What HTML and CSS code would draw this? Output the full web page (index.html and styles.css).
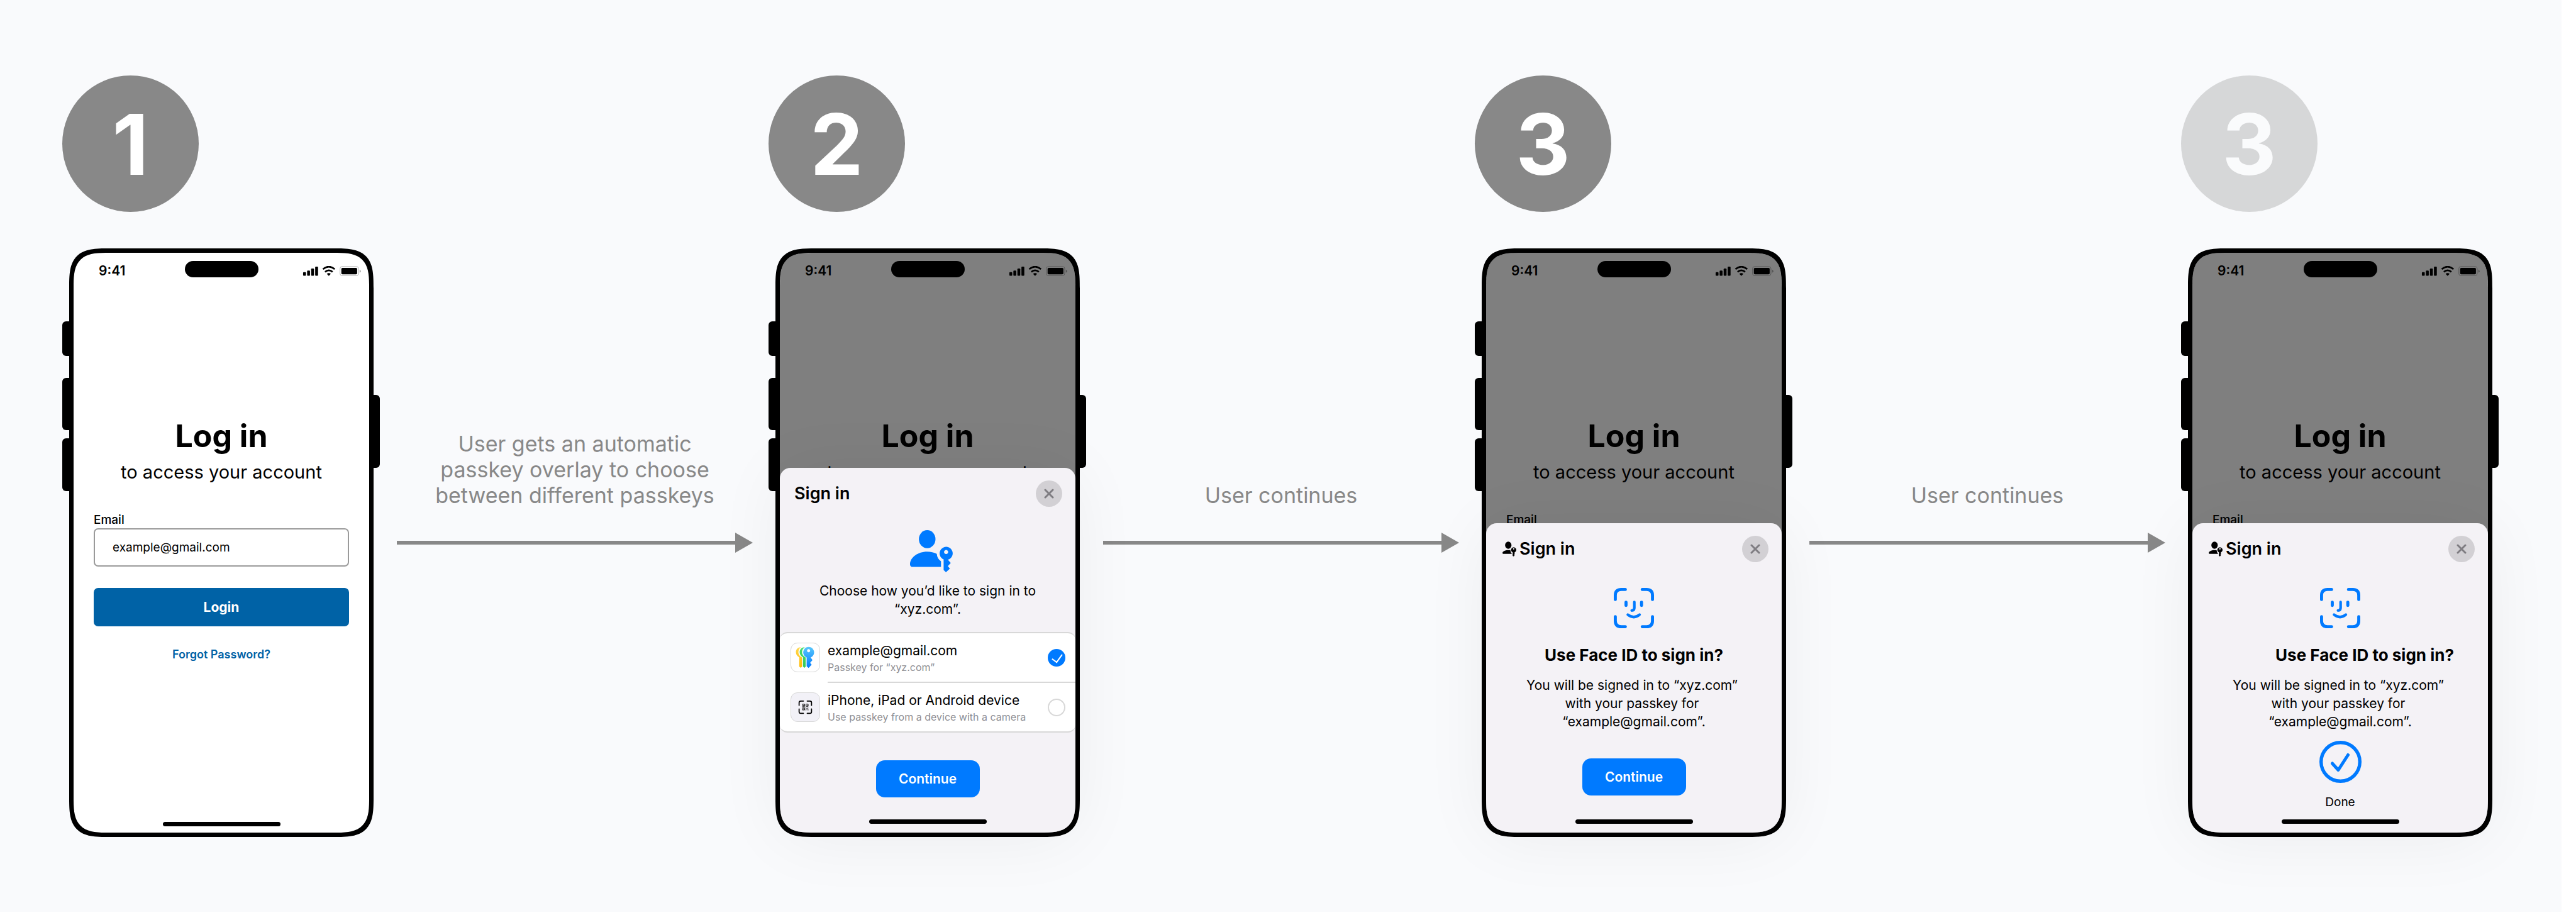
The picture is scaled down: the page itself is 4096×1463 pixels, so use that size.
FILE: index.html
```html
<!DOCTYPE html>
<html lang="en">
<head>
<meta charset="utf-8">
<meta name="viewport" content="width=device-width, initial-scale=1">
<title>Passkey sign-in flow</title>
<link rel="stylesheet" href="styles.css">
</head>
<body>
<svg class="sprite" aria-hidden="true">
  <defs>
    <linearGradient id="key-blue" x1="0" y1="0" x2="0" y2="1"><stop offset="0" stop-color="#5ac8fa"/><stop offset="1" stop-color="#007aff"/></linearGradient>
    <linearGradient id="key-green" x1="0" y1="0" x2="0" y2="1"><stop offset="0" stop-color="#4be070"/><stop offset="1" stop-color="#34c759"/></linearGradient>
    <linearGradient id="key-yellow" x1="0" y1="0" x2="0" y2="1"><stop offset="0" stop-color="#ffd84f"/><stop offset="1" stop-color="#ffb900"/></linearGradient>
  </defs>
  <symbol id="status" viewBox="0 0 403 70">
    <rect x="0" y="43" width="20" height="25" rx="5"/>
    <rect x="28" y="32" width="20" height="36" rx="5"/>
    <rect x="56" y="18" width="20" height="50" rx="5"/>
    <rect x="84" y="4" width="20" height="64" rx="5"/>
    <path d="M138 22Q179-12 220 22M153 41Q179 19 205 41" fill="none" stroke="#000" stroke-width="12"/>
    <path d="M165 55Q179 44 193 55L179 69Z"/>
    <rect x="257" y="4" width="128" height="63" rx="14" fill="none" stroke="#aaa" stroke-width="4"/>
    <rect x="266" y="13" width="110" height="45" rx="8"/>
    <path d="M393 25Q402 28 402 36Q402 44 393 47Z" fill="#aaa"/>
  </symbol>
  <symbol id="passkey" viewBox="105 83 294 289">
    <ellipse cx="223" cy="145" rx="57" ry="62"/>
    <path d="M105 318C105 270 160 231 222 231C248 231 270 237 289 246C290 268 300 285 318 297V336H124C112 336 105 330 105 318Z"/>
    <path fill-rule="evenodd" d="M336 284A45 45 0 1 1 365 286L385 309L365 330L379 347L352 372L336 357ZM353 219a14 14 0 1 0 .1 0Z"/>
  </symbol>
  <symbol id="passkey-small" viewBox="63 102 95 102">
    <ellipse cx="103" cy="127" rx="22" ry="25"/>
    <path d="M63 181C63 170 85 161 103 161C109 161 114 161 118 163C118 172 122 181 128 186H68Q63 186 63 181Z"/>
    <path fill-rule="evenodd" d="M133 176A18 18 0 1 1 147 176L146 184L148 188L143 193L146 199L139 204L133 200ZM140 147a5 5 0 1 0 .1 0Z"/>
  </symbol>
  <symbol id="face-id" viewBox="0 0 92 92">
    <g fill="none" stroke="#007aff" stroke-linecap="round" stroke-width="7">
      <path d="M3.500 26.500V17Q3.500 3.500 17 3.500H26.500M65 3.500H75Q88.500 3.500 88.500 17V26.500M88.500 65.500V75Q88.500 88.500 75 88.500H65M26.500 88.500H17Q3.500 88.500 3.500 75V65.500"/>
      <path d="M28 32.500V40M63.500 32.500V40"/>
      <path stroke-width="6" d="M47 32V45.500Q47 51.500 41 51.500M32 61Q46 72 59 61"/>
    </g>
  </symbol>
  <symbol id="close" viewBox="0 0 16 16">
    <path d="M2 2L14 14M14 2L2 14" fill="none" stroke="#7f7d82" stroke-width="3" stroke-linecap="round"/>
  </symbol>
</svg>

<main class="canvas">
  <section class="step">
    <div class="badge">1</div>
    <div class="phone">
      <span class="key key-mute"></span><span class="key key-up"></span><span class="key key-down"></span><span class="key key-power"></span>
      <div class="screen">
        <div class="status-bar"><span class="time">9:41</span><span class="island"></span><svg class="status-icons"><use href="#status"/></svg></div>
        <h1 class="login-title">Log in</h1>
        <p class="login-sub">to access your account</p>
        <form class="login-form">
          <label class="field-label" for="email">Email</label>
          <input class="field" id="email" type="text" value="example@gmail.com">
          <button class="login-button" type="button">Login</button>
          <a class="forgot" href="#">Forgot Password?</a>
        </form>
        <span class="home-bar"></span>
      </div>
    </div>
  </section>

  <div class="connector">
    <p class="connector-text">User gets an automatic<br>passkey overlay to choose<br>between different passkeys</p>
    <div class="arrow"></div>
  </div>

  <section class="step">
    <div class="badge">2</div>
    <div class="phone">
      <span class="key key-mute"></span><span class="key key-up"></span><span class="key key-down"></span><span class="key key-power"></span>
      <div class="screen">
        <div class="status-bar"><span class="time">9:41</span><span class="island"></span><svg class="status-icons"><use href="#status"/></svg></div>
        <h1 class="login-title">Log in</h1>
        <p class="login-sub">to access your account</p>
        <div class="dim"></div>
      </div>
      <div class="sheet">
        <header class="sheet-header">
          <h2 class="sheet-title">Sign in</h2>
          <button class="close" type="button" aria-label="Close"><svg class="close-icon"><use href="#close"/></svg></button>
        </header>
        <svg class="passkey-icon"><use href="#passkey"/></svg>
        <p class="sheet-text choose">Choose how you’d like to sign in to<br>“xyz.com”.</p>
        <div class="options">
          <label class="option" for="opt-passkey">
            <svg class="option-icon" viewBox="35 69 203 203">
              <path fill="url(#key-yellow)" d="M106 97C83 97 69 112 69 133C69 150 79 162 93 169V236L104 245L113 236V170C98 162 87 150 87 133C87 117 94 104 106 97Z"/>
              <path fill="url(#key-green)" d="M133 97C110 97 96 112 96 133C96 150 106 162 120 169V236L131 245L139 236V170C124 162 113 150 113 133C113 117 121 104 133 97Z"/>
              <path fill="url(#key-blue)" fill-rule="evenodd" d="M146 170A39 39 0 1 1 175 170L188 190L171 209L182 222L160 246L146 234ZM160 111a11 11 0 1 0 .1 0Z"/>
            </svg>
            <span class="option-body"><span class="option-name">example@gmail.com</span><span class="option-note">Passkey for “xyz.com”</span></span>
            <input class="radio" id="opt-passkey" type="radio" name="method" checked>
          </label>
          <label class="option option-last" for="opt-device">
            <svg class="option-icon option-icon-tinted" viewBox="35 411 203 203">
              <path fill="none" stroke="#000" stroke-width="8" stroke-linecap="round" d="M92 500V480Q92 469 103 469H123M150 469H170Q181 469 181 480V500M181 526V546Q181 557 170 557H150M123 557H103Q92 557 92 546V526"/>
              <path fill="none" stroke="#000" stroke-width="4" d="M116 491h16v16h-16zM141 491h16v16h-16zM116 517h16v16h-16z"/>
              <path d="M121 496h6v6h-6zM146 496h6v6h-6zM121 522h6v6h-6zM138 516h6v6h-6zM153 516h5v5h-5zM145 522h7v6h-7zM138 529h6v6h-6zM153 529h6v6h-6z"/>
            </svg>
            <span class="option-body"><span class="option-name">iPhone, iPad or Android device</span><span class="option-note">Use passkey from a device with a camera</span></span>
            <input class="radio" id="opt-device" type="radio" name="method">
          </label>
        </div>
        <button class="continue" type="button">Continue</button>
        <span class="home-bar"></span>
      </div>
    </div>
  </section>

  <div class="connector">
    <p class="connector-text">User continues</p>
    <div class="arrow"></div>
  </div>

  <section class="step">
    <div class="badge">3</div>
    <div class="phone">
      <span class="key key-mute"></span><span class="key key-up"></span><span class="key key-down"></span><span class="key key-power"></span>
      <div class="screen">
        <div class="status-bar"><span class="time">9:41</span><span class="island"></span><svg class="status-icons"><use href="#status"/></svg></div>
        <h1 class="login-title">Log in</h1>
        <p class="login-sub">to access your account</p>
        <p class="login-form field-label">Email</p>
        <div class="dim"></div>
      </div>
      <div class="sheet">
        <header class="sheet-header">
          <svg class="title-icon"><use href="#passkey-small"/></svg>
          <h2 class="sheet-title">Sign in</h2>
          <button class="close" type="button" aria-label="Close"><svg class="close-icon"><use href="#close"/></svg></button>
        </header>
        <svg class="face-icon"><use href="#face-id"/></svg>
        <h3 class="face-title">Use Face ID to sign in?</h3>
        <p class="sheet-text">You will be signed in to “xyz.com”&nbsp;<br>with your passkey for&nbsp;<br>“example@gmail.com”.</p>
        <button class="continue" type="button">Continue</button>
        <span class="home-bar home-bar-low"></span>
      </div>
    </div>
  </section>

  <div class="connector">
    <p class="connector-text">User continues</p>
    <div class="arrow"></div>
  </div>

  <section class="step">
    <div class="badge badge-faded">3</div>
    <div class="phone">
      <span class="key key-mute"></span><span class="key key-up"></span><span class="key key-down"></span><span class="key key-power"></span>
      <div class="screen">
        <div class="status-bar"><span class="time">9:41</span><span class="island"></span><svg class="status-icons"><use href="#status"/></svg></div>
        <h1 class="login-title">Log in</h1>
        <p class="login-sub">to access your account</p>
        <p class="login-form field-label">Email</p>
        <div class="dim"></div>
      </div>
      <div class="sheet">
        <header class="sheet-header">
          <svg class="title-icon"><use href="#passkey-small"/></svg>
          <h2 class="sheet-title">Sign in</h2>
          <button class="close" type="button" aria-label="Close"><svg class="close-icon"><use href="#close"/></svg></button>
        </header>
        <svg class="face-icon"><use href="#face-id"/></svg>
        <h3 class="face-title face-title-indented">Use Face ID to sign in?</h3>
        <p class="sheet-text">You will be signed in to “xyz.com”&nbsp;<br>with your passkey for&nbsp;<br>“example@gmail.com”.</p>
        <svg class="done-icon" viewBox="0 0 67 67"><g fill="none" stroke="#007aff"><circle cx="33.500" cy="33.500" r="30.800" stroke-width="5.400"/><path d="M20.500 36L30 46.500L45.500 22.500" stroke-width="5" stroke-linecap="round" stroke-linejoin="round"/></g></svg>
        <p class="done-text">Done</p>
        <span class="home-bar home-bar-done"></span>
      </div>
    </div>
  </section>
</main>
</body>
</html>
```
FILE: styles.css
```css
* { box-sizing: border-box; }

body {
  margin: 0;
  background: #fff;
  color: #000;
  font-family: Inter, "Liberation Sans", sans-serif;
}

h1, h2, h3, p { margin: 0; }

button, input { font-family: inherit; }

.sprite {
  position: absolute;
  width: 0;
  height: 0;
}

/* Canvas: four steps with stretching connectors between them */
.canvas {
  display: grid;
  grid-template-columns: 505px 1fr 505px 1fr 505px 1fr 505px;
  margin: 0 23px 13px 0;
  padding: 120px 100px 119px 99px;
  background: #f9fafc;
}

.badge {
  display: flex;
  align-items: center;
  justify-content: center;
  width: 217px;
  height: 217px;
  border-radius: 50%;
  background: #888;
  color: #fff;
  font-size: 134px;
  font-weight: 700;
  line-height: 162px;
}

.badge-faded { opacity: 0.3; }

.connector {
  align-self: end;
  padding: 0 25px 0 27px;
  margin-bottom: 452px;
}

.connector-text {
  margin-bottom: 39px;
  color: #888;
  font-size: 34px;
  line-height: 41px;
  text-align: center;
  white-space: nowrap;
}

.arrow {
  display: flex;
  align-items: center;
}

.arrow::before {
  content: "";
  flex: 1;
  height: 6px;
  background: #888;
}

.arrow::after {
  content: "";
  width: 28px;
  height: 32px;
  background: #888;
  clip-path: polygon(0 0, 100% 50%, 0 100%);
}

/* Phone */
.phone {
  position: relative;
  aspect-ratio: 484 / 936;
  margin: 58px 10px 0 11px;
  border: 7px solid #000;
  border-radius: 44px;
  background: #fff;
}

.key {
  position: absolute;
  left: -18px;
  width: 14px;
  border-radius: 6px 0 0 6px;
  background: #000;
}

.key-mute { top: 109px; height: 55px; }
.key-up { top: 199px; height: 83px; }
.key-down { top: 295px; height: 84px; }

.key-power {
  top: 226px;
  left: auto;
  right: -17px;
  height: 116px;
  border-radius: 0 6px 6px 0;
}

.screen {
  position: relative;
  display: flex;
  flex-direction: column;
  height: 100%;
  padding: 13px 0 10px;
}

.dim {
  position: absolute;
  inset: 0;
  border-radius: 37px;
  background: rgba(0, 0, 0, 0.5);
}

.status-bar {
  display: grid;
  grid-template-columns: 1fr auto 1fr;
  align-items: end;
  height: 29px;
}

.time {
  margin-left: 40px;
  font-size: 21px;
  font-weight: 600;
  line-height: 26px;
}

.island {
  align-self: start;
  width: 117px;
  height: 26px;
  border-radius: 13px;
  background: #000;
}

.status-icons {
  justify-self: end;
  width: 94px;
  height: 16px;
  margin: 0 12px 5px 0;
}

.login-title {
  margin-top: 220px;
  font-size: 50px;
  font-weight: 700;
  line-height: 58px;
  text-align: center;
}

.login-sub {
  margin-top: 12px;
  font-size: 29px;
  line-height: 34px;
  text-align: center;
}

.login-form {
  display: flex;
  flex-direction: column;
  margin: 48px 32px 0;
}

.field-label {
  font-size: 19px;
  font-weight: 500;
  line-height: 22px;
}

.field {
  height: 61px;
  margin-top: 2px;
  padding: 0 28px;
  border: 2px solid #9a9a9a;
  border-radius: 7px;
  background: #fff;
  color: #000;
  font-size: 19px;
}

.login-button {
  height: 61px;
  margin-top: 34px;
  border: 0;
  border-radius: 7px;
  background: #0062a6;
  color: #fff;
  font-size: 21px;
  font-weight: 700;
}

.forgot {
  align-self: center;
  margin-top: 33px;
  color: #0062a6;
  font-size: 18px;
  font-weight: 600;
  line-height: 24px;
  text-decoration: none;
}

.home-bar {
  align-self: center;
  width: 187px;
  height: 7px;
  margin-top: auto;
  border-radius: 4px;
  background: #000;
}

/* Bottom sheet */
.sheet {
  position: absolute;
  right: 0;
  bottom: 0;
  left: 0;
  display: flex;
  flex-direction: column;
  align-items: center;
  padding: 20px 0 14px;
  border-radius: 17px 17px 37px 37px;
  background: #f4f2f6;
  box-shadow: 0 8px 110px rgba(0, 0, 0, 0.06);
}

.sheet-header {
  display: flex;
  align-items: center;
  align-self: stretch;
  padding: 0 21px 0 23px;
}

.title-icon {
  width: 22px;
  height: 24px;
  margin: 0 5px 0 3px;
}

.sheet-title {
  font-size: 27px;
  font-weight: 600;
  line-height: 32px;
}

.close {
  display: flex;
  align-items: center;
  justify-content: center;
  width: 42px;
  height: 42px;
  margin-left: auto;
  padding: 0;
  border: 0;
  border-radius: 50%;
  background: #d2d0d4;
}

.close-icon {
  width: 16px;
  height: 16px;
}

.passkey-icon {
  width: 68px;
  height: 67px;
  margin: 37px 0 15px 12px;
  fill: #007aff;
}

.sheet-text {
  font-size: 21px;
  line-height: 29px;
  text-align: center;
}

.options {
  align-self: stretch;
  margin-top: 22px;
  border-top: 2px solid #d8d8d8;
  border-bottom: 2px solid #d8d8d8;
  border-radius: 12px;
  background: #fff;
}

.option {
  display: flex;
  align-items: center;
  height: 77px;
  padding: 0 16px 0 17px;
}

.option-last {
  height: 79px;
  background: linear-gradient(#d8d8d8, #d8d8d8) 76px 0 / 100% 2px no-repeat;
  padding-top: 2px;
}

.option-icon {
  width: 47px;
  height: 47px;
  margin-right: 12px;
  border: 1px solid #d8d8d8;
  border-radius: 11px;
  background: #fff;
}

.option-icon-tinted { background: #f2f1f7; }

.option-body {
  display: flex;
  flex: 1;
  flex-direction: column;
  white-space: nowrap;
}

.option-name {
  font-size: 21px;
  line-height: 30px;
}

.option-note {
  color: #8e8e93;
  font-size: 16px;
  line-height: 22px;
}

.radio {
  position: relative;
  width: 28px;
  height: 28px;
  margin: 0;
  border: 2px solid #d8d8d8;
  border-radius: 50%;
  background: #fff;
  appearance: none;
}

.radio:checked {
  border-color: #007aff;
  background: #007aff;
}

.radio:checked::after {
  content: "";
  position: absolute;
  top: 3px;
  left: 8px;
  width: 8px;
  height: 14px;
  border: solid #fff;
  border-width: 0 2px 2px 0;
  transform: rotate(36deg);
}

.continue {
  width: 165px;
  height: 59px;
  margin-top: 44px;
  border: 0;
  border-radius: 14px;
  background: #007aff;
  color: #fff;
  font-size: 21px;
  font-weight: 600;
}

.sheet .home-bar { margin-top: 35px; }
.sheet .home-bar-low { margin-top: 38px; }
.sheet .home-bar-done { margin-top: 16px; }

.face-icon {
  width: 64px;
  height: 64px;
  margin-top: 41px;
}

.face-title {
  margin: 28px 0 18px;
  font-size: 26px;
  font-weight: 700;
  line-height: 30px;
}

.face-title-indented { padding-left: 78px; }

.done-icon {
  width: 67px;
  height: 67px;
  margin-top: 16px;
}

.done-text {
  margin-top: 20px;
  font-size: 19px;
  line-height: 22px;
}

/* Continuous device corners where the browser can draw them */
@supports (corner-shape: superellipse(2)) {
  .phone {
    border-radius: 64px;
    corner-shape: superellipse(1.7);
  }

  .dim {
    border-radius: 57px;
    corner-shape: superellipse(1.7);
  }

  .sheet {
    border-radius: 17px 17px 57px 57px;
    corner-shape: round round superellipse(1.7) superellipse(1.7);
  }
}
```
